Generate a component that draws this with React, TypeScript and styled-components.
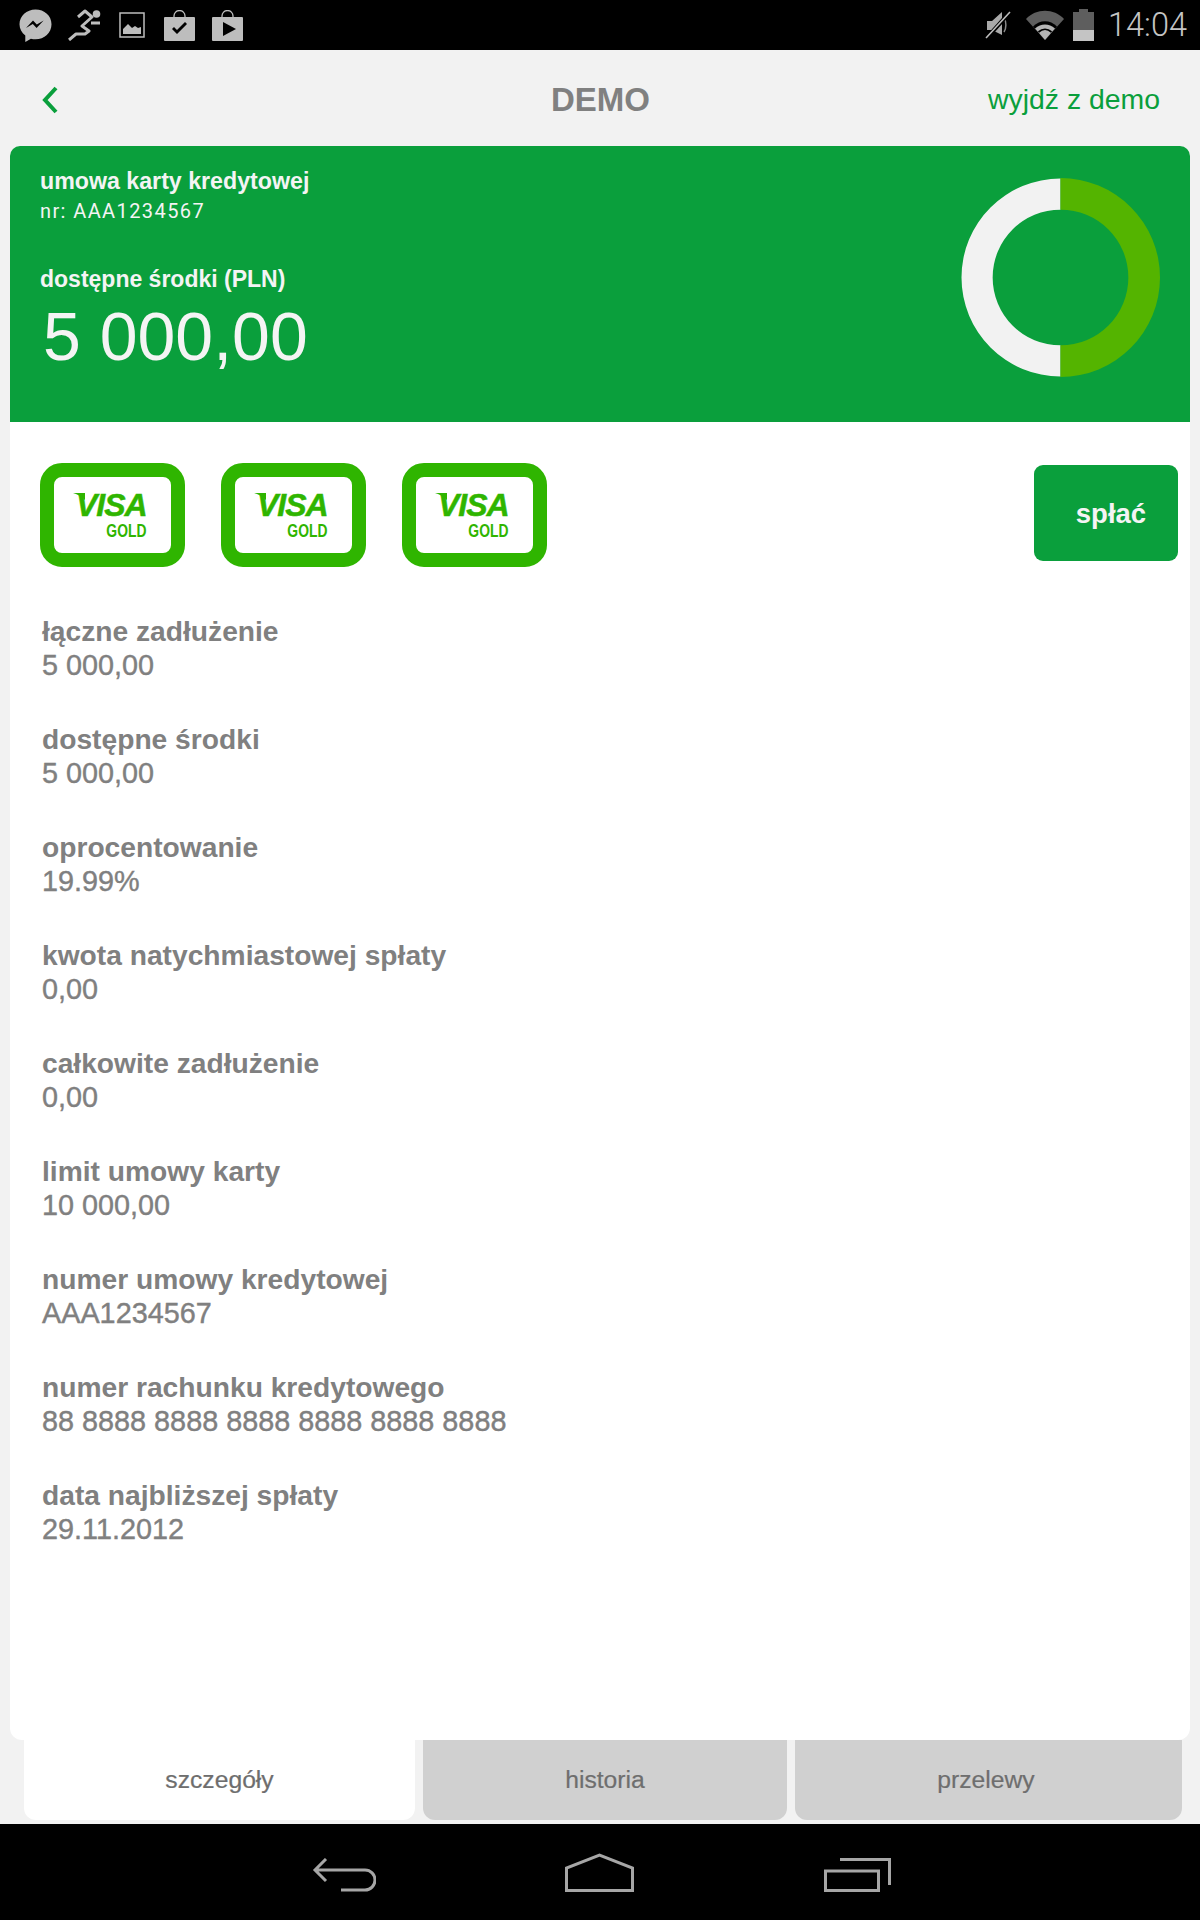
import React from "react";
import styled, { createGlobalStyle } from "styled-components";

const Global = createGlobalStyle`
  html, body {
    margin: 0;
    background: #f2f2f2;
  }
  * {
    box-sizing: border-box;
  }
`;

const Screen = styled.div`
  width: 1200px;
  height: 1920px;
  display: flex;
  flex-direction: column;
  background: #f2f2f2;
  font-family: "Liberation Sans", Arial, sans-serif;
  overflow: hidden;
`;

const StatusBar = styled.div`
  height: 50px;
  flex: none;
  background: #000;
  display: flex;
  align-items: center;
  justify-content: space-between;
  padding: 0 13px 0 19px;
`;

const StatusGroup = styled.div`
  display: flex;
  align-items: center;
`;

const StatusSvg = styled.svg<{ $gap?: number }>`
  display: block;
  flex: none;
  margin-right: ${(p) => p.$gap ?? 0}px;
`;

const Clock = styled.span`
  font-family: Roboto, sans-serif;
  font-weight: 300;
  font-size: 32.5px;
  line-height: 50px;
  color: #c4c4c4;
`;

const Header = styled.div`
  height: 96px;
  flex: none;
  display: grid;
  grid-template-columns: 1fr auto 1fr;
  align-items: center;
  padding: 3px 40px 0 41px;
`;

const Title = styled.div`
  font-size: 33px;
  font-weight: 700;
  color: #808080;
`;

const ExitLink = styled.div`
  justify-self: end;
  font-size: 28.4px;
  color: #0a9f3c;
`;

const Panel = styled.div`
  flex: none;
  height: 1594px;
  margin: 0 10px;
  background: #fff;
  border-radius: 10px 10px 12px 12px;
  display: flex;
  flex-direction: column;
`;

const Hero = styled.div`
  height: 276px;
  flex: none;
  background: #0a9f3c;
  border-radius: 10px 10px 0 0;
  color: #f4f4f4;
  display: flex;
  justify-content: space-between;
  padding: 20px 30px 0 30px;
`;

const HeroText = styled.div`
  display: flex;
  flex-direction: column;
`;

const ContractName = styled.div`
  font-size: 23.2px;
  font-weight: 700;
  line-height: 30px;
`;

const ContractNo = styled.div`
  font-family: Roboto, sans-serif;
  font-size: 20px;
  line-height: 30px;
  letter-spacing: 1.4px;
`;

const FundsLabel = styled.div`
  margin-top: 36px;
  font-size: 23px;
  font-weight: 700;
  line-height: 34px;
`;

const FundsValue = styled.div`
  margin: 2px 0 0 3px;
  font-size: 68px;
  line-height: 76px;
`;

const Donut = styled.svg`
  display: block;
  margin-top: 12px;
`;

const CardsRow = styled.div`
  display: flex;
  align-items: flex-start;
  padding: 41px 12px 0 30px;
`;

const Cards = styled.div`
  display: flex;
  gap: 36px;
  flex: 1;
`;

const VisaCard = styled.div`
  width: 145px;
  height: 104px;
  border: 14px solid #2fb500;
  border-radius: 22px;
  background: #fff;
  position: relative;
`;

const VisaWord = styled.span`
  position: absolute;
  left: 22px;
  top: 10px;
  font-size: 32px;
  line-height: 36px;
  font-weight: 700;
  font-style: italic;
  color: #2fb500;
  letter-spacing: -1px;
  -webkit-text-stroke: 0.5px #2fb500;
`;

const VisaFlick = styled.svg`
  position: absolute;
  left: 19px;
  top: 16px;
`;

const GoldWord = styled.span`
  position: absolute;
  right: 25px;
  top: 44px;
  font-size: 18.5px;
  line-height: 20px;
  font-weight: 700;
  color: #2fb500;
  transform: scaleX(0.75);
  transform-origin: right center;
`;

const PayButton = styled.div`
  width: 144px;
  height: 96px;
  margin-top: 2px;
  border-radius: 9px;
  background: #0a9f3c;
  color: #f4f4f4;
  font-size: 27.5px;
  font-weight: 700;
  display: flex;
  align-items: center;
  justify-content: center;
  padding: 1px 0 0 10px;
`;

const Details = styled.div`
  padding: 47px 0 0 32px;
  display: flex;
  flex-direction: column;
  gap: 40px;
`;

const DetailItem = styled.div`
  color: #808080;
  line-height: 34px;
`;

const DetailLabel = styled.div`
  font-size: 28.2px;
  font-weight: 700;
`;

const DetailValue = styled.div`
  font-size: 28.8px;
  font-weight: 400;
  -webkit-text-stroke: 0.4px #808080;
`;

const Tabs = styled.div`
  flex: none;
  height: 80px;
  display: flex;
  gap: 8px;
  padding: 0 18px 0 24px;
`;

const Tab = styled.div<{ $active?: boolean; $width: number }>`
  width: ${(p) => p.$width}px;
  flex: none;
  border-radius: 0 0 12px 12px;
  background: ${(p) => (p.$active ? "#fff" : "#d0d0d0")};
  color: #6e6e6e;
  font-size: 24.7px;
  display: flex;
  align-items: center;
  justify-content: center;
  padding-bottom: 1px;
  -webkit-text-stroke: 0.2px #6e6e6e;
  &:last-child {
    padding-right: 5px;
  }
`;

const NavBar = styled.div`
  margin-top: 4px;
  flex: 1;
  background: #000;
  display: flex;
  align-items: flex-start;
  padding: 29px 0 0 312px;
`;

const NavIcon = styled.svg<{ $gap: number; $top: number }>`
  display: block;
  flex: none;
  margin-right: ${(p) => p.$gap}px;
  margin-top: ${(p) => p.$top}px;
`;

const details = [
  ["łączne zadłużenie", "5 000,00"],
  ["dostępne środki", "5 000,00"],
  ["oprocentowanie", "19.99%"],
  ["kwota natychmiastowej spłaty", "0,00"],
  ["całkowite zadłużenie", "0,00"],
  ["limit umowy karty", "10 000,00"],
  ["numer umowy kredytowej", "AAA1234567"],
  ["numer rachunku kredytowego", "88 8888 8888 8888 8888 8888 8888"],
  ["data najbliższej spłaty", "29.11.2012"],
];

const tabs = [
  { label: "szczegóły", width: 391, active: true },
  { label: "historia", width: 364 },
  { label: "przelewy", width: 387 },
];

const GREY = "#bdbdbd";

const StatusLeft = () => (
  <StatusGroup>
    <StatusSvg width="33" height="33" viewBox="0 0 33 33" $gap={15}>
      <path
        d="M16.5 0.5C7.6 0.5 0.5 7 0.5 15.2c0 4.6 2.2 8.5 5.8 11.2V33l5.6-3.3c1.5.4 3 .6 4.6.6 8.9 0 16-6.6 16-15.1S25.400.5 16.500.5z"
        fill={GREY}
      />
      <path d="M7 19l7-7.500 3.800 4 6.800-4-7 7.500-3.800-4z" fill="#000" />
    </StatusSvg>
    <StatusSvg width="34" height="32" viewBox="0 0 34 32" $gap={18}>
      <circle cx="29.500" cy="5" r="3.800" fill={GREY} />
      <path
        d="M11 8l7-6 7 6-10 9 7 5-4 3H9L2 31M24 14h9"
        fill="none"
        stroke={GREY}
        strokeWidth="3"
        strokeLinejoin="round"
      />
    </StatusSvg>
    <StatusSvg width="26" height="26" viewBox="0 0 26 26" $gap={19}>
      <rect x="1" y="1" width="24" height="24" fill="none" stroke={GREY} strokeWidth="1.500" />
      <path d="M4 22v-5l5-5 4 4 3-2 3 2 3-1v7z" fill={GREY} />
    </StatusSvg>
    <StatusSvg width="31" height="31" viewBox="0 0 31 31" $gap={17}>
      <path d="M10 8V6a5.500 5.500 0 0 1 11 0v2" fill="none" stroke={GREY} strokeWidth="1.300" />
      <rect x="0" y="7" width="31" height="24" rx="1" fill={GREY} />
      <path d="M8 19l2-2 3 3 8-8 2 2-10 10z" fill="#000" />
    </StatusSvg>
    <StatusSvg width="31" height="31" viewBox="0 0 31 31">
      <path d="M10 8V6a5.500 5.500 0 0 1 11 0v2" fill="none" stroke={GREY} strokeWidth="1.300" />
      <rect x="0" y="7" width="31" height="24" rx="1" fill={GREY} />
      <path d="M11 12l13 7-13 7z" fill="#000" />
    </StatusSvg>
  </StatusGroup>
);

const StatusRight = () => (
  <StatusGroup>
    <StatusSvg width="26" height="28" viewBox="0 0 26 28" $gap={15}>
      <path d="M2 10h5l10-9v23l-10-5h-5z" fill="#a9a9a9" />
      <path d="M19 7c2.500 4 2.500 10 0 14" fill="none" stroke="#8a8a8a" strokeWidth="1.500" />
      <path d="M25 1L1 28" stroke="#000" strokeWidth="4" />
      <path d="M25 1L1 27" stroke="#bdbdbd" strokeWidth="1.600" />
    </StatusSvg>
    <StatusSvg width="38" height="30" viewBox="0 0 38 30" $gap={9}>
      <path d="M0 9C10 -2 28 -2 38 9L19 30z" fill="#5e5e5e" />
      <path d="M7 16.500C14 9.500 24 9.500 31 16.500L19 30z" fill="#000" />
      <path d="M9 18.500C15 13 23 13 29 18.500L19 30z" fill="#b5b5b5" />
      <path d="M12.500 22C16.500 18.500 21.500 18.500 25.500 22" fill="none" stroke="#000" strokeWidth="1.800" />
    </StatusSvg>
    <StatusSvg width="21" height="32" viewBox="0 0 21 32" $gap={14}>
      <path d="M6 0h9v3h6v19H0V3h6z" fill="#5e5e5e" />
      <rect x="0" y="21" width="21" height="11" fill="#c4c4c4" />
    </StatusSvg>
    <Clock>14:04</Clock>
  </StatusGroup>
);

const App = () => (
  <>
    <Global />
    <Screen>
      <StatusBar>
        <StatusLeft />
        <StatusRight />
      </StatusBar>
      <Header>
        <svg width="18" height="28" viewBox="0 0 18 28" style={{ display: "block" }}>
          <path d="M15 2L4 14l11 12" fill="none" stroke="#0a9f3c" strokeWidth="4" />
        </svg>
        <Title>DEMO</Title>
        <ExitLink>wyjdź z demo</ExitLink>
      </Header>
      <Panel>
        <Hero>
          <HeroText>
            <ContractName>umowa karty kredytowej</ContractName>
            <ContractNo>nr: AAA1234567</ContractNo>
            <FundsLabel>dostępne środki (PLN)</FundsLabel>
            <FundsValue>5 000,00</FundsValue>
          </HeroText>
          <Donut width="199" height="199" viewBox="0 0 198 198">
            <path
              d="M99 0.500a98.500 98.500 0 0 0 0 197v-31a67.500 67.500 0 0 1 0-135z"
              fill="#f2f2f2"
            />
            <path
              d="M99 0a99 99 0 0 1 0 198v-31.500a67.500 67.500 0 0 0 0-135z"
              fill="#54b400"
            />
          </Donut>
        </Hero>
        <CardsRow>
          <Cards>
            {[0, 1, 2].map((i) => (
              <VisaCard key={i}>
                <VisaFlick width="12" height="8" viewBox="0 0 12 8">
                  <path d="M0 0h12v7C8 3 4 1 0 0z" fill="#2fb500" />
                </VisaFlick>
                <VisaWord>VISA</VisaWord>
                <GoldWord>GOLD</GoldWord>
              </VisaCard>
            ))}
          </Cards>
          <PayButton>spłać</PayButton>
        </CardsRow>
        <Details>
          {details.map(([label, value]) => (
            <DetailItem key={label}>
              <DetailLabel>{label}</DetailLabel>
              <DetailValue>{value}</DetailValue>
            </DetailItem>
          ))}
        </Details>
      </Panel>
      <Tabs>
        {tabs.map((t) => (
          <Tab key={t.label} $active={t.active} $width={t.width}>
            {t.label}
          </Tab>
        ))}
      </Tabs>
      <NavBar>
        <NavIcon width="64" height="34" viewBox="0 0 64 34" $gap={189} $top={5}>
          <path
            d="M14 1L3 12l11 11M3 12h50a9.500 9.500 0 0 1 0 20H29"
            fill="none"
            stroke="#a6a6a6"
            strokeWidth="3"
          />
        </NavIcon>
        <NavIcon width="69" height="39" viewBox="0 0 69 39" $gap={190} $top={0}>
          <path d="M1.500 37.500V15L34.500 2l33 13v22.500z" fill="none" stroke="#a6a6a6" strokeWidth="3" />
        </NavIcon>
        <NavIcon width="67" height="34" viewBox="0 0 67 34" $gap={0} $top={5}>
          <path d="M1.500 13h53v19.500h-53z" fill="none" stroke="#a6a6a6" strokeWidth="3" />
          <path d="M16 1.500h49.500V27" fill="none" stroke="#a6a6a6" strokeWidth="3" />
        </NavIcon>
      </NavBar>
    </Screen>
  </>
);

export default App;
